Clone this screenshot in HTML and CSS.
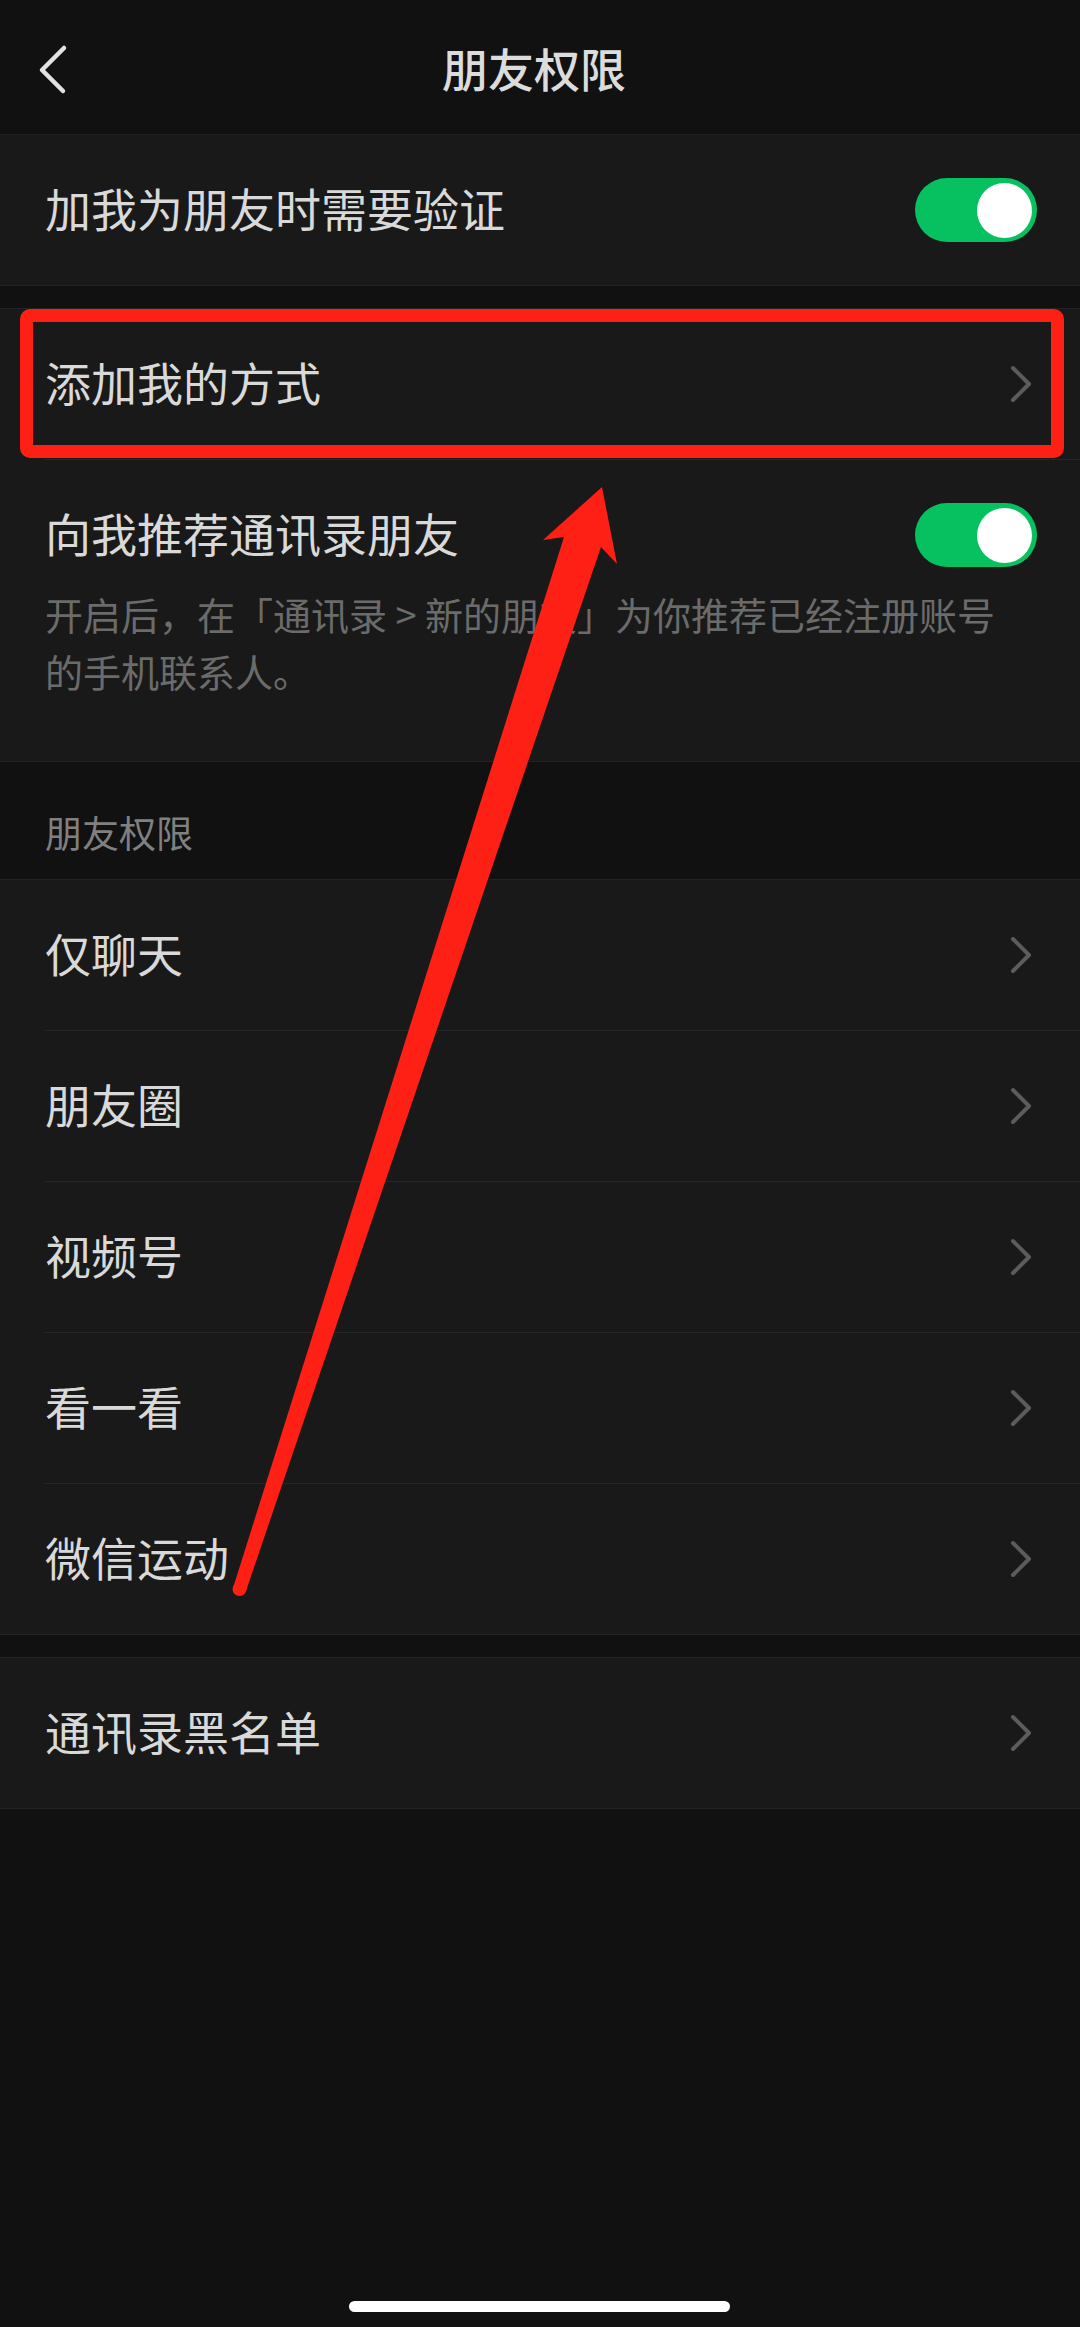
FILE: index.html
```html
<!DOCTYPE html>
<html lang="zh-CN">
<head>
<meta charset="utf-8">
<title>朋友权限</title>
<link rel="stylesheet" href="styles.css">
</head>
<body>
<div class="page">
  <header class="nav">
    <svg class="back" width="40" height="60" viewBox="0 0 40 60"><polyline points="26,4 4,26 25,47" fill="none" stroke="#e2e2e2" stroke-width="4.5" stroke-linecap="round" stroke-linejoin="round"/></svg>
    <div class="nav-title">朋友权限</div>
  </header>

  <section class="group">
    <div class="row">
      <div class="row-inner last">
        <span class="label">加我为朋友时需要验证</span>
        <span class="toggle"><span class="knob"></span></span>
      </div>
    </div>
  </section>

  <section class="group gap">
    <div class="row marked">
      <div class="row-inner">
        <span class="label">添加我的方式</span>
        <svg class="chev" width="22" height="38" viewBox="0 0 22 38"><polyline points="3,3 19,19 3,35" fill="none" stroke="#5c5c5c" stroke-width="4" stroke-linecap="round" stroke-linejoin="round"/></svg>
      </div>
      <div class="redbox"></div>
    </div>
    <div class="row">
      <div class="row-inner last tall">
        <div class="tall-head">
          <span class="label">向我推荐通讯录朋友</span>
          <span class="toggle"><span class="knob"></span></span>
        </div>
        <p class="desc">开启后，在「通讯录 &gt; 新的朋友」为你推荐已经注册账号的手机联系人。</p>
      </div>
    </div>
  </section>

  <div class="section-head">朋友权限</div>

  <section class="group">
    <div class="row"><div class="row-inner"><span class="label">仅聊天</span><svg class="chev" width="22" height="38" viewBox="0 0 22 38"><polyline points="3,3 19,19 3,35" fill="none" stroke="#5c5c5c" stroke-width="4" stroke-linecap="round" stroke-linejoin="round"/></svg></div></div>
    <div class="row"><div class="row-inner"><span class="label">朋友圈</span><svg class="chev" width="22" height="38" viewBox="0 0 22 38"><polyline points="3,3 19,19 3,35" fill="none" stroke="#5c5c5c" stroke-width="4" stroke-linecap="round" stroke-linejoin="round"/></svg></div></div>
    <div class="row"><div class="row-inner"><span class="label">视频号</span><svg class="chev" width="22" height="38" viewBox="0 0 22 38"><polyline points="3,3 19,19 3,35" fill="none" stroke="#5c5c5c" stroke-width="4" stroke-linecap="round" stroke-linejoin="round"/></svg></div></div>
    <div class="row"><div class="row-inner"><span class="label">看一看</span><svg class="chev" width="22" height="38" viewBox="0 0 22 38"><polyline points="3,3 19,19 3,35" fill="none" stroke="#5c5c5c" stroke-width="4" stroke-linecap="round" stroke-linejoin="round"/></svg></div></div>
    <div class="row"><div class="row-inner last"><span class="label">微信运动</span><svg class="chev" width="22" height="38" viewBox="0 0 22 38"><polyline points="3,3 19,19 3,35" fill="none" stroke="#5c5c5c" stroke-width="4" stroke-linecap="round" stroke-linejoin="round"/></svg></div></div>
  </section>

  <section class="group gap">
    <div class="row"><div class="row-inner last"><span class="label">通讯录黑名单</span><svg class="chev" width="22" height="38" viewBox="0 0 22 38"><polyline points="3,3 19,19 3,35" fill="none" stroke="#5c5c5c" stroke-width="4" stroke-linecap="round" stroke-linejoin="round"/></svg></div></div>
  </section>

  <svg class="annot-arrow" width="1080" height="2327" viewBox="0 0 1080 2327">
    <polygon points="602,487 617,564 601,547 246,1591 233,1588 564,537 543,540" fill="#fe1f15"/>
    <circle cx="239.5" cy="1589" r="7" fill="#fe1f15"/>
  </svg>

  <div class="home-indicator"></div>
</div>
</body>
</html>
```

FILE: styles.css
```css
html, body {
  margin: 0;
  padding: 0;
  background: #111111;
}

body {
  font-family: "Noto Sans CJK SC", "Noto Sans", sans-serif;
  color: #d9d9d9;
}

.page {
  position: relative;
  width: 1080px;
  min-height: 2327px;
  background: #111111;
  overflow: hidden;
}

.nav {
  height: 134px;
  border-bottom: 1px solid #1f1f1f;
  display: flex;
  align-items: center;
  justify-content: center;
  position: relative;
  background: #111111;
}

.back {
  position: absolute;
  left: 38px;
  top: 44px;
}

.nav-title {
  font-size: 46px;
  font-weight: 500;
  color: #dcdcdc;
  line-height: 1;
  margin-top: -1px;
  margin-right: 12px;
}

.group {
  background: #191919;
  border-bottom: 1px solid #232323;
}

.group.gap {
  margin-top: 22px;
  border-top: 1px solid #232323;
}

.row {
  position: relative;
  padding-left: 45px;
}

.row-inner {
  height: 151px;
  box-sizing: border-box;
  border-bottom: 1px solid #262626;
  display: flex;
  align-items: center;
  justify-content: space-between;
  padding-right: 43px;
}

.row-inner.last {
  border-bottom: none;
  height: 150px;
}

.label {
  font-size: 46px;
  line-height: 1;
  color: #d9d9d9;
  margin-bottom: 6px;
}

.chev {
  margin-right: 5px;
  flex: none;
}

.toggle {
  width: 122px;
  height: 64px;
  border-radius: 32px;
  background: #07c160;
  display: flex;
  align-items: center;
  justify-content: flex-end;
  padding-right: 5px;
  box-sizing: border-box;
  flex: none;
}

.knob {
  width: 55px;
  height: 55px;
  border-radius: 50%;
  background: #ffffff;
}

.row-inner.tall {
  height: auto;
  display: block;
  padding-top: 43px;
  padding-bottom: 62px;
}

.tall-head {
  display: flex;
  align-items: center;
  justify-content: space-between;
  height: 64px;
}

.desc {
  margin: 18px 0 0 0;
  padding-right: 35px;
  font-size: 38px;
  line-height: 57px;
  color: #6b6b6b;
}

.section-head {
  padding: 44px 45px 21px;
  font-size: 37px;
  line-height: 52px;
  color: #808080;
  border-bottom: 1px solid #232323;
}

.redbox {
  position: absolute;
  left: 20px;
  right: 16px;
  top: 0;
  height: 149px;
  box-sizing: border-box;
  border: 13px solid #fe1f15;
  border-radius: 10px;
  pointer-events: none;
}

.annot-arrow {
  position: absolute;
  left: 0;
  top: 0;
  pointer-events: none;
}

.home-indicator {
  position: absolute;
  left: 349px;
  top: 2301px;
  width: 381px;
  height: 11px;
  border-radius: 6px;
  background: #ffffff;
}
```
